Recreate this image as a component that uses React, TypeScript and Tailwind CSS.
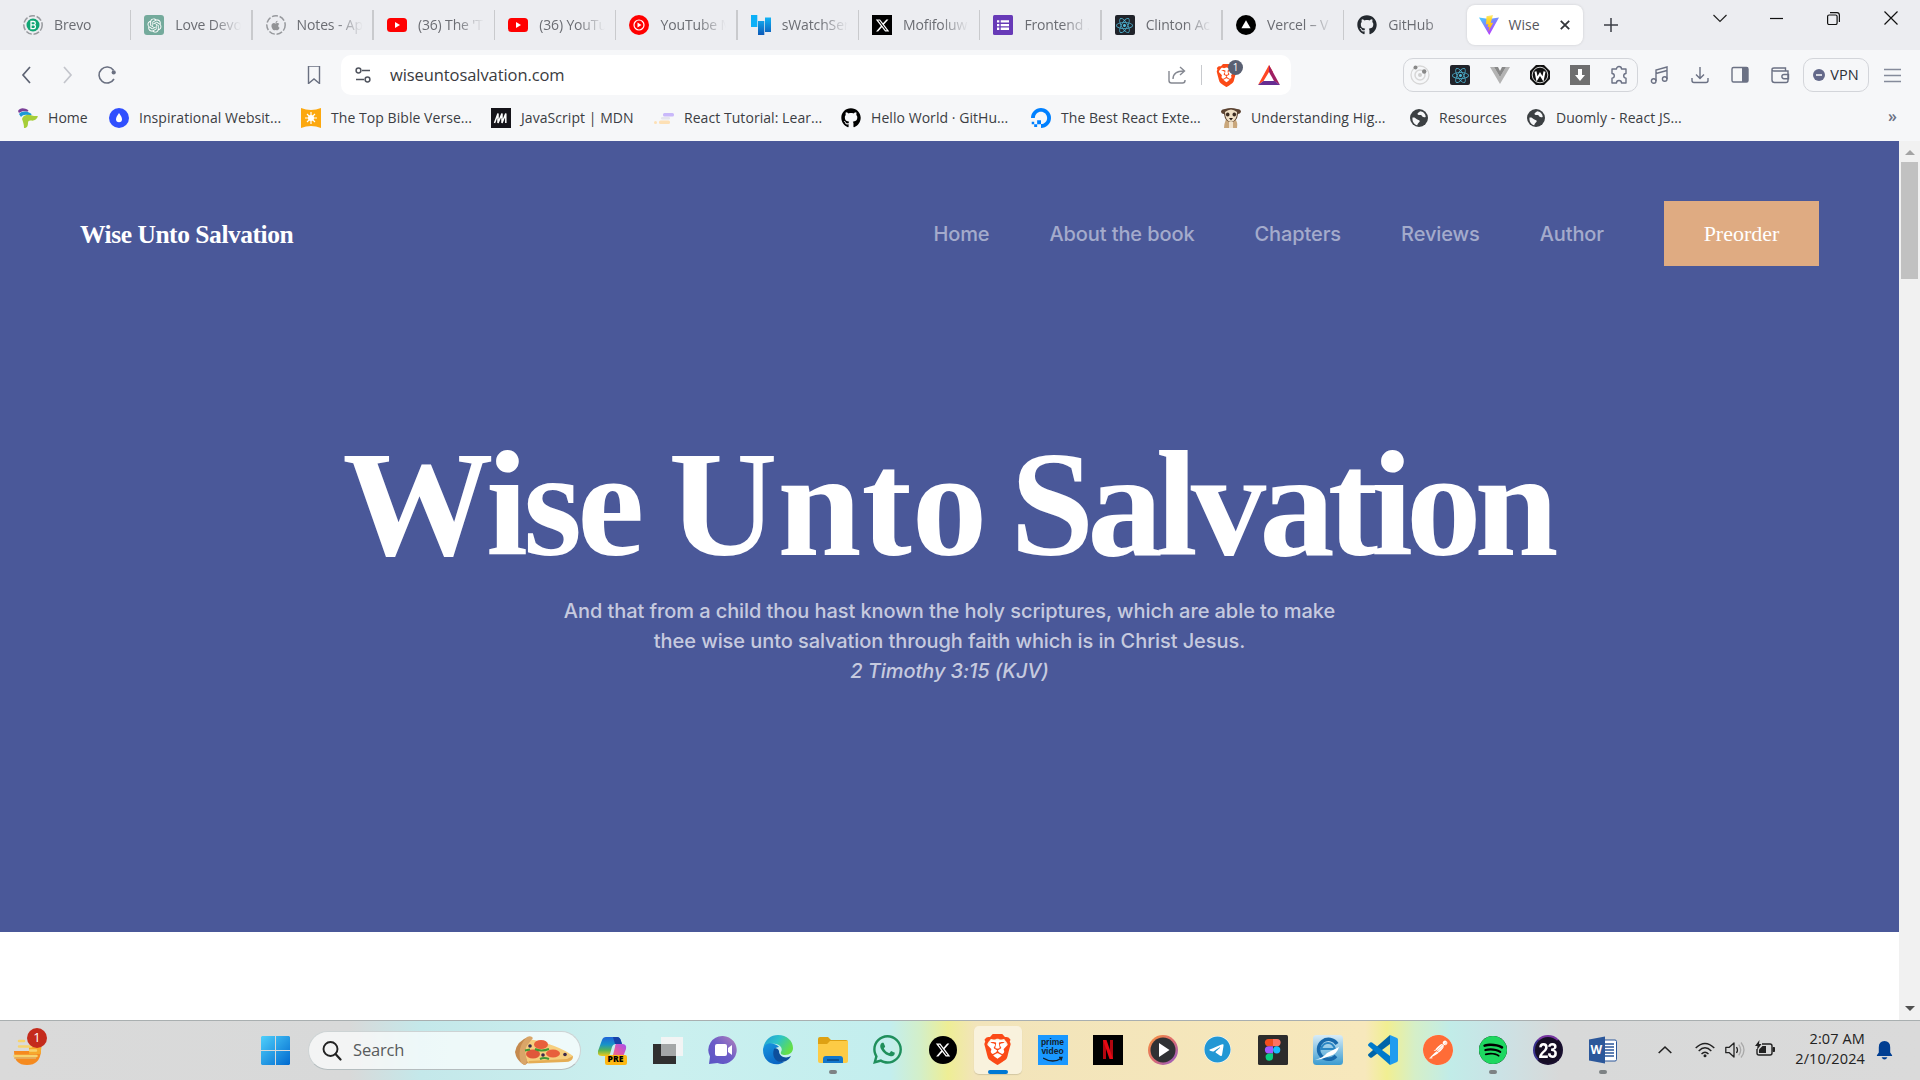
import React from "react";
import { FaGithub, FaWhatsapp, FaXTwitter, FaApple, FaTelegram, FaReact } from "react-icons/fa6";
import { SiBrave, SiSpotify, SiPostman, SiDigitalocean } from "react-icons/si";
import { RiOpenaiFill } from "react-icons/ri";

type Kids = { children?: React.ReactNode };

function S({ size = 20, box = "0 0 20 20", children }: Kids & { size?: number; box?: string }) {
  return (
    <svg width={size} height={size} viewBox={box} fill="none" className="block shrink-0">
      {children}
    </svg>
  );
}

const YouTube = () => (
  <S>
    <rect x="0" y="3" width="20" height="14" rx="3.5" fill="#f00" />
    <path d="M8 7l5 3-5 3z" fill="#fff" />
  </S>
);

const Brave = ({ size }: { size: number }) => (
  <span className="relative block">
    <svg width={size} height={size} viewBox="0 0 24 24" className="block">
      <path d="M7 5h10l3 5-3 8-5 4-5-4-3-8z" fill="#fff" />
    </svg>
    <SiBrave size={size} className="absolute inset-0 text-[#fb4a17]" />
  </span>
);

const ReactLogo = () => (
  <span className="flex size-5 items-center justify-center rounded-[2px] bg-[#20232a]">
    <FaReact size={17} className="text-[#4fb9d8]" />
  </span>
);

const Globe = () => (
  <S>
    <circle cx="10" cy="10" r="9" fill="#3c4043" />
    <path d="M3.5 9.5c2-.3 3 .3 4 1.500s3 .5 3.200 2c.1 1.700-2 1.500-2.400 4.300C5 16.500 3 13.500 3.500 9.500zM11 3.200c-.6 1.300-2.300 1.300-2.500 2.500s1.600 1.500 3 1.300c1.600-.2 1.300 1.600 2.600 2.100 1 .4 2.100-.1 2.600-.1.100-3.200-2.600-5.500-5.700-5.800z" fill="#f6f7f9" />
  </S>
);

const tabs: { title: string; icon: React.ReactNode }[] = [
  {
    title: "Brevo",
    icon: (
      <S>
        <circle cx="10" cy="10" r="9.200" stroke="#97999d" strokeWidth="1.500" strokeDasharray="6 1.800" />
        <circle cx="10" cy="10" r="6.500" fill="#0fa573" />
        <path d="M8 6.500h2.600a1.600 1.600 0 010 3.400H8zM8 9.900h3a1.900 1.900 0 010 3.700H8zM8 6.500v7.100" stroke="#fff" strokeWidth="1.300" />
      </S>
    ),
  },
  {
    title: "Love Devo",
    icon: (
      <span className="flex size-5 items-center justify-center rounded-[3px] bg-[#74aa9c]">
        <RiOpenaiFill size={17} className="text-white" />
      </span>
    ),
  },
  {
    title: "Notes - Ap",
    icon: (
      <span className="relative flex size-5 items-center justify-center">
        <span className="absolute inset-0">
          <S>
            <circle cx="10" cy="10" r="9.200" stroke="#97999d" strokeWidth="1.500" strokeDasharray="6 1.800" />
          </S>
        </span>
        <FaApple size={11} className="text-[#929396]" />
      </span>
    ),
  },
  { title: "(36) The 'T", icon: <YouTube /> },
  { title: "(36) YouTu", icon: <YouTube /> },
  {
    title: "YouTube M",
    icon: (
      <S>
        <circle cx="10" cy="10" r="10" fill="#f00" />
        <circle cx="10" cy="10" r="5" stroke="#fff" strokeWidth="1.200" />
        <path d="M8.500 7.500l4 2.500-4 2.500z" fill="#fff" />
      </S>
    ),
  },
  {
    title: "sWatchSer",
    icon: (
      <S>
        <defs>
          <linearGradient id="sw" x1="0" y1="0" x2="0" y2="1">
            <stop stopColor="#12b4f5" />
            <stop offset="1" stopColor="#0c59b8" />
          </linearGradient>
        </defs>
        <path d="M0 0h6.300v12H0z" fill="#0db0f7" />
        <path d="M7 6h6.300v14H7zM14 2.500h6V17h-6z" fill="url(#sw)" />
      </S>
    ),
  },
  {
    title: "Mofifoluw",
    icon: (
      <span className="flex size-5 items-center justify-center bg-black">
        <FaXTwitter size={15} className="text-white" />
      </span>
    ),
  },
  {
    title: "Frontend .",
    icon: (
      <S>
        <rect width="20" height="20" rx="1.500" fill="#673ab7" />
        <path d="M4 5.200h2.300v2.300H4zm3.700 0H16v2.300H7.700zM4 8.900h2.300v2.300H4zm3.700 0H16v2.300H7.700zM4 12.600h2.300v2.300H4zm3.700 0H16v2.300H7.700z" fill="#fff" />
      </S>
    ),
  },
  { title: "Clinton Ac", icon: <ReactLogo /> },
  {
    title: "Vercel – V",
    icon: (
      <S>
        <circle cx="10" cy="10" r="10" fill="#000" />
        <path d="M10 5.200l4.600 8H5.400z" fill="#fff" />
      </S>
    ),
  },
  { title: "GitHub", icon: <FaGithub size={20} className="text-[#24292f]" /> },
];

const bookmarks: { label: string; w: string; icon: React.ReactNode }[] = [
  {
    label: "Home",
    w: "w-[91px]",
    icon: (
      <S>
        <path d="M0 3c2-4 7-3 10-1 1 1 0 2-2 1.500C5 3 3 3.500 1 5z" fill="#7a3f98" />
        <path d="M1 6c3-3 7-3 11-1 2 1 2 2.500 0 2.500C8 6 5 6.500 3 9z" fill="#1d9ad6" />
        <path d="M4 11c1-4 6-5 10-3.500 3 .8 4 .5 6 .7-1 3-4 5-7 4.300-2-.2-3 .5-3 2.500 0 3-1 5-4 5C6 16 5 14 4 11z" fill="#a6ce39" />
      </S>
    ),
  },
  {
    label: "Inspirational Websit...",
    w: "w-[192px]",
    icon: (
      <S>
        <circle cx="10" cy="10" r="10" fill="#304ffe" />
        <path d="M10 5c2 3 3 4.500 3 6.200a3 3 0 01-6 0C7 9.500 8 8 10 5z" fill="#fff" />
      </S>
    ),
  },
  {
    label: "The Top Bible Verse...",
    w: "w-[190px]",
    icon: (
      <S>
        <path d="M0 0q10 4 20 0v20q-10-4-20 0z" fill="#fca80f" />
        <path d="M10 4v12M4 10h12M6 6l8 8M14 6l-8 8" stroke="#fff" strokeWidth="1.200" />
        <circle cx="10" cy="10" r="3" fill="#fff" />
      </S>
    ),
  },
  {
    label: "JavaScript | MDN",
    w: "w-[163px]",
    icon: (
      <S>
        <path d="M0 0h20v20H0z" fill="#15141a" />
        <path d="M3.500 15L7 5.500V15l4-9.500V15l3.800-9.500V15" stroke="#fff" strokeWidth="1.500" />
      </S>
    ),
  },
  {
    label: "React Tutorial: Lear...",
    w: "w-[187px]",
    icon: (
      <S>
        <rect x="9" y="5" width="11" height="3.500" rx="1.500" fill="#c9b8fa" />
        <rect x="7" y="9" width="9" height="2.500" rx="1.200" fill="#e4e4ec" />
        <rect x="5" y="12.500" width="11" height="3.500" rx="1.500" fill="#fde0b5" />
        <circle cx="1.500" cy="14.500" r="1.500" fill="#fde0b5" />
      </S>
    ),
  },
  { label: "Hello World · GitHu...", w: "w-[190px]", icon: <FaGithub size={20} className="text-black" /> },
  { label: "The Best React Exte...", w: "w-[190px]", icon: <SiDigitalocean size={20} className="text-[#0080ff]" /> },
  {
    label: "Understanding Hig...",
    w: "w-[188px]",
    icon: (
      <S>
        <path d="M5 11q-2 5-2 9h13q1-6-2-9z" fill="#c9a77c" />
        <path d="M8 13h4v7H8z" fill="#f1e3cd" />
        <path d="M0 3q1-2 4-2 6-2 12 0 4 0 4 3-1 2-3 2-1 8-7 8T3 6Q0 6 0 3z" fill="#5b4332" />
        <path d="M4 4q6-5 12 0 0 9-6 10Q4 13 4 4z" fill="#efdfc5" />
        <ellipse cx="6.700" cy="6.500" rx="1.800" ry="2" fill="#3a2a20" />
        <ellipse cx="13.300" cy="6.500" rx="1.800" ry="2" fill="#3a2a20" />
        <path d="M8 10h4l-2 2.500z" fill="#231815" />
      </S>
    ),
  },
  { label: "Resources", w: "w-[117px]", icon: <Globe /> },
  { label: "Duomly - React JS...", w: "w-[180px]", icon: <Globe /> },
];

function TabStrip() {
  return (
    <div className="flex h-[50px] bg-[#ecedf1] pl-[10px]">
      {tabs.map((t, i) => (
        <div key={t.title} className="flex h-[50px] w-[121.300px] shrink-0 items-center">
          <div className="flex w-[120px] items-center gap-[11px] overflow-hidden pl-[13px]">
            {t.icon}
            <span className="mb-[2px] w-[66px] overflow-hidden text-[14px] tracking-[-0.01em] whitespace-nowrap text-[#6b6d73] [mask-image:linear-gradient(to_right,#000_58%,transparent_100%)]">
              {t.title}
            </span>
          </div>
          {i < 11 && <div className="h-[30px] w-[1.500px] bg-[#c9cacd]" />}
        </div>
      ))}
      <div className="mt-[5px] ml-[1px] flex h-10 w-[116px] shrink-0 items-center rounded-lg bg-white pl-3 shadow-[0_0_3px_#0002]">
        <S>
          <defs>
            <linearGradient id="vi" x1="0" y1="0" x2=".6" y2="1">
              <stop stopColor="#41d1ff" />
              <stop offset="1" stopColor="#bd34fe" />
            </linearGradient>
            <linearGradient id="vb" x1="0" y1="0" x2="0" y2="1">
              <stop stopColor="#ffea83" />
              <stop offset=".2" stopColor="#ffdd35" />
              <stop offset="1" stopColor="#ffa800" />
            </linearGradient>
          </defs>
          <path d="M0 2.500L10 4l10-1.500L10.300 20z" fill="url(#vi)" />
          <path d="M14 0L7.500 1.300 7 9.500l2.300-.5-.7 3.200 1.800-.5-1.200 5 5-9-2.500.4z" fill="url(#vb)" />
        </S>
        <span className="mb-[2px] ml-[10px] w-[51px] text-[14px] text-[#55565c]">Wise</span>
        <S size={10} box="0 0 10 10">
          <path d="M.8.800l8.400 8.400M9.200.800L.8 9.200" stroke="#33353a" strokeWidth="1.800" />
        </S>
      </div>
      <div className="flex h-[50px] w-[56px] items-center justify-center">
        <S size={14} box="0 0 14 14">
          <path d="M7 0v14M0 7h14" stroke="#3b3e45" strokeWidth="1.500" />
        </S>
      </div>
      <div className="ml-auto flex h-9 items-center pr-[22px]">
        <div className="w-[57px]">
          <S size={14} box="0 0 14 14">
            <path d="M.5 4L7 10.500 13.500 4" stroke="#222" strokeWidth="1.200" />
          </S>
        </div>
        <div className="w-[57px]">
          <S size={13} box="0 0 13 13">
            <path d="M0 6.500h13" stroke="#111" strokeWidth="1.200" />
          </S>
        </div>
        <div className="w-[57px]">
          <S size={13} box="0 0 13 13">
            <rect x=".6" y="3" width="9.500" height="9.500" rx="1.500" stroke="#111" strokeWidth="1.200" />
            <path d="M3 .7h7A2.500 2.500 0 0112.400 3v7" stroke="#111" strokeWidth="1.200" />
          </S>
        </div>
        <S size={14} box="0 0 14 14">
          <path d="M.5.500l13 13M13.500.500l-13 13" stroke="#111" strokeWidth="1.200" />
        </S>
      </div>
    </div>
  );
}

const Slot = ({ children }: Kids) => <div className="flex w-10 shrink-0 items-center justify-center">{children}</div>;

function Toolbar() {
  return (
    <div className="flex h-[50px] items-center">
      <div className="flex w-[134px] shrink-0 items-center pl-[7px]">
        <Slot>
          <S>
            <path d="M13 2L6 10l7 8" stroke="#5c6272" strokeWidth="1.700" />
          </S>
        </Slot>
        <Slot>
          <S>
            <path d="M7 2l7 8-7 8" stroke="#c3c5cc" strokeWidth="1.700" />
          </S>
        </Slot>
        <Slot>
          <S>
            <path d="M16.500 5.300A8 8 0 1017 14" stroke="#6a7081" strokeWidth="1.600" />
            <circle cx="16.700" cy="7.400" r="2.100" fill="#6a7081" />
          </S>
        </Slot>
      </div>
      <div className="ml-[171px] w-[36px]">
        <S size={18} box="0 0 18 18">
          <path d="M3.500 0h11v17.500L9 13l-5.500 4.500z" stroke="#6a7081" strokeWidth="1.400" />
        </S>
      </div>
      <div className="flex h-10 w-[950px] shrink-0 items-center rounded-[10px] bg-white pl-[14px]">
        <S size={16} box="0 0 16 16">
          <path d="M7 3.500h8M1 12.500h8" stroke="#50545e" strokeWidth="1.500" />
          <circle cx="3.500" cy="3.500" r="2.400" stroke="#50545e" strokeWidth="1.500" />
          <circle cx="12.500" cy="12.500" r="2.400" stroke="#50545e" strokeWidth="1.500" />
        </S>
        <span className="ml-[19px] text-[16.500px] tracking-[-0.005em] text-[#3a3b40]">wiseuntosalvation.com</span>
        <div className="ml-auto flex items-center pr-[11px]">
          <S size={18} box="0 0 18 18">
            <path d="M1 5v9.500Q1 17 3.500 17h11q2.500 0 2.500-2.500V14M5 13c0-5 3-8 11-8M12 1l4.500 4L12 9" stroke="#858891" strokeWidth="1.400" />
          </S>
          <div className="mr-[13px] ml-[15px] h-5 w-px bg-[#c8cace]" />
          <div className="relative w-[43px]">
            <Brave size={23} />
            <span className="absolute top-[-4px] left-[13px] flex size-[15px] items-center justify-center rounded-full bg-[#5a6072] text-[10px] text-white">1</span>
          </div>
          <S size={22} box="0 0 22 20">
            <path d="M11 0l4 7-4 0-5.500 9L0 20z" fill="#ff4724" />
            <path d="M11 0l11 20-6-4-5-9z" fill="#9e1f63" />
            <path d="M0 20h22l-5.500-4h-11z" fill="#662d91" />
          </S>
        </div>
      </div>
      <div className="ml-[112px] flex h-[34px] w-[235px] shrink-0 items-center justify-center rounded-[10px] border border-[#d3d5da]">
        <div className="flex items-center pr-[3px]">
          <Slot>
            <S>
              <circle cx="10" cy="10" r="9" stroke="#d7d7d7" strokeWidth="1.300" />
              <circle cx="10" cy="10" r="5" stroke="#d7d7d7" strokeWidth="1.500" />
              <circle cx="10" cy="10" r="2" fill="#cfcfcf" />
              <circle cx="5.500" cy="2.500" r="2" fill="#888" />
              <circle cx="14.200" cy="6.500" r="2.200" fill="#888" />
            </S>
          </Slot>
          <Slot><ReactLogo /></Slot>
          <Slot>
            <S>
              <path d="M0 2h4l6 10 6-10h4L10 19z" fill="#b3b3b3" />
              <path d="M4 2h4l2 4 2-4h4l-6 10z" fill="#888" />
            </S>
          </Slot>
          <Slot>
            <S>
              <path d="M6 0h8l6 6v8l-6 6H6l-6-6V6z" fill="#111" />
              <circle cx="10" cy="10" r="7.800" stroke="#fff" strokeWidth=".8" />
              <path d="M5.500 6.500L7 14l3-5 3 5 1.500-7.500" stroke="#fff" strokeWidth="2" />
            </S>
          </Slot>
          <Slot>
            <S>
              <path d="M0 0h20v20H0z" fill="#6f6f6f" />
              <path d="M8 4h4v6h3l-5 6-5-6h3z" fill="#fff" />
            </S>
          </Slot>
          <div className="flex w-[38px] justify-center">
            <S>
              <path d="M3 4h4.500a2.500 2.500 0 015 0H17v4.500a2.300 2.300 0 000 4.600V18h-4.500a2.500 2.500 0 00-5 0H3v-4.900a2.300 2.300 0 000-4.600z" stroke="#6b7184" strokeWidth="1.400" strokeLinejoin="round" />
            </S>
          </div>
        </div>
      </div>
      <div className="flex items-center pl-[2px]">
        <Slot>
          <S>
            <path d="M6 16V5l11-3v12M6 8.500l11-3" stroke="#6b7184" strokeWidth="1.400" />
            <circle cx="3.700" cy="16" r="2.300" stroke="#6b7184" strokeWidth="1.400" />
            <circle cx="14.700" cy="14" r="2.300" stroke="#6b7184" strokeWidth="1.400" />
          </S>
        </Slot>
        <Slot>
          <S>
            <path d="M10 2v11M6 9.500l4 4 4-4M2 13v2.500Q2 17.500 4 17.500h12q2 0 2-2V13" stroke="#6b7184" strokeWidth="1.400" />
          </S>
        </Slot>
        <Slot>
          <S>
            <rect x="2" y="2.500" width="16" height="14.500" rx="1.500" stroke="#6b7184" strokeWidth="1.400" />
            <path d="M12 2.500h6V17h-6z" fill="#6b7184" />
          </S>
        </Slot>
        <Slot>
          <S>
            <path d="M18 7V6H4Q2 6 2 4.500T4 3h11.500v3M2 4.500V15q0 2.500 2.500 2.500H16q2 0 2-2V6" stroke="#6b7184" strokeWidth="1.400" />
            <path d="M18.500 9.500H14a2 2 0 000 4.200h4.500z" stroke="#6b7184" strokeWidth="1.400" />
          </S>
        </Slot>
      </div>
      <div className="ml-[3px] flex h-[34px] w-[66px] shrink-0 items-center justify-center gap-[5px] rounded-[10px] border border-[#d3d5da]">
        <S size={12} box="0 0 12 12">
          <circle cx="6" cy="6" r="6" fill="#64698a" />
          <path d="M3 6h6" stroke="#fff" strokeWidth="1.500" />
        </S>
        <span className="text-[14.500px] text-[#2d2f36]">VPN</span>
      </div>
      <div className="pl-[15px]">
        <S size={17} box="0 0 17 17">
          <path d="M0 2.500h17M0 8.500h17M0 14.500h17" stroke="#858b9b" strokeWidth="1.500" />
        </S>
      </div>
    </div>
  );
}

function Bookmarks() {
  return (
    <div className="flex h-[36px] items-center pl-[18px]">
      {bookmarks.map((b) => (
        <div key={b.label} className={`flex shrink-0 items-center gap-[10px] ${b.w}`}>
          {b.icon}
          <span className="mb-[2px] text-[14px] tracking-[0.004em] whitespace-nowrap text-[#3b3d43]">{b.label}</span>
        </div>
      ))}
      <span className="mr-[23px] ml-auto pb-1 text-[16px] font-semibold text-[#6b7184]">»</span>
    </div>
  );
}

function Site() {
  return (
    <main className="h-full flex-1 bg-white">
      <section className="h-[791px] bg-[#4a5899] pt-[60px]">
        <header className="flex h-[65px] items-center pr-20 pl-20">
          <div className="pt-[3px] font-['Liberation_Serif',serif] text-[25.500px] font-bold tracking-[-0.018em] text-white">Wise Unto Salvation</div>
          <nav className="ml-auto flex items-center gap-[60px] font-[Inter,sans-serif] text-[20px] font-medium tracking-[-0.1px] text-white/50">
            <a>Home</a>
            <a>About the book</a>
            <a>Chapters</a>
            <a>Reviews</a>
            <a>Author</a>
            <button className="h-[65px] w-[155px] bg-[#dfab82] font-['Liberation_Serif',serif] text-[22px] font-normal tracking-normal text-white">Preorder</button>
          </nav>
        </header>
        <div className="mt-[160px] flex flex-col items-center">
          <h1 className="flex h-[166px] pt-[3px] pr-[5px] font-['Liberation_Serif',serif] text-[151px] leading-[150px] font-bold whitespace-nowrap text-white">
            <span className="tracking-[-4.800px]">Wise</span>
            <span className="ml-[29px]">Unto</span>
            <span className="ml-[23px] tracking-[-7px]">Salvation</span>
          </h1>
          <p className="mt-[4px] text-center font-[Inter,sans-serif] text-[20px] leading-[30px] font-medium tracking-[-0.075px] text-white/70">
            And that from a child thou hast known the holy scriptures, which are able to make
            <br />
            thee wise unto salvation through faith which is in Christ Jesus.
            <br />
            <em>2 Timothy 3:15 (KJV)</em>
          </p>
        </div>
      </section>
    </main>
  );
}

function Scrollbar() {
  return (
    <div className="flex w-[21px] flex-col items-center bg-[#f1f1f1]">
      <div className="flex h-[21px] items-center">
        <S size={10} box="0 0 10 6">
          <path d="M0 6l5-5 5 5z" fill="#a3a3a3" />
        </S>
      </div>
      <div className="h-[117px] w-[17px] bg-[#c1c1c1]" />
      <div className="mt-auto flex h-[22px] items-center">
        <S size={10} box="0 0 10 6">
          <path d="M0 0l5 5 5-5z" fill="#505050" />
        </S>
      </div>
    </div>
  );
}

const apps: { name: string; state?: "open" | "active"; icon: React.ReactNode }[] = [
  {
    name: "copilot",
    icon: (
      <div className="relative">
        <S size={30} box="0 0 30 30">
          <defs>
            <linearGradient id="c1" x1="0" y1="0" x2="0" y2="1">
              <stop stopColor="#1f63d8" />
              <stop offset=".4" stopColor="#1793c8" />
              <stop offset=".7" stopColor="#57b455" />
              <stop offset="1" stopColor="#f3cb1b" />
            </linearGradient>
            <linearGradient id="c2" x1="1" y1="0" x2="0" y2="1">
              <stop stopColor="#a24ff0" />
              <stop offset=".5" stopColor="#e45aa5" />
              <stop offset="1" stopColor="#fb8a55" />
            </linearGradient>
          </defs>
          <path d="M8 2h11q3 0 4 4l1 3h-6q-3 0-4 3l-2 7q-1 2-3 2H4q-5 0-4-5L4 5q1-3 4-3z" fill="url(#c1)" />
          <path d="M15 2h4q3 0 4 4l1 3h-7z" fill="#1741a8" />
          <path d="M18 9h6q5 0 4 5l-3 8q-1 3-4 3h-9q2-1 3-5l2-8q0-2 1-3z" fill="url(#c2)" />
        </S>
        <span className="absolute bottom-0 left-[7px] flex h-[10px] w-[22px] items-center justify-center rounded-[2px] bg-[#fdb813] text-[8.500px] font-extrabold text-black">PRE</span>
      </div>
    ),
  },
  {
    name: "task-view",
    icon: (
      <S size={30} box="0 0 30 30">
        <path d="M0 9h23v20H0z" fill="#303030" />
        <path d="M8 2h22v19H8z" fill="#f2f4f4" />
        <path d="M8 9h15v12H8z" fill="#a4a7a7" />
      </S>
    ),
  },
  {
    name: "chat",
    icon: (
      <S size={30} box="0 0 30 30">
        <defs>
          <linearGradient id="ch" x1="1" y1="0" x2="0" y2="1">
            <stop stopColor="#b684bb" />
            <stop offset=".5" stopColor="#6c5cc8" />
            <stop offset="1" stopColor="#5a55c4" />
          </linearGradient>
        </defs>
        <path d="M15 1a14 14 0 11-5.500 27L1 29l1-7.500A14 14 0 0115 1z" fill="url(#ch)" />
        <rect x="7" y="9" width="12" height="12" rx="2" fill="#fff" />
        <path d="M20 13l4-3v10l-4-3z" fill="#fff" />
      </S>
    ),
  },
  {
    name: "edge",
    icon: (
      <S size={30} box="0 0 30 30">
        <defs>
          <linearGradient id="e1" x1="0" y1="0" x2="1" y2=".5">
            <stop stopColor="#2199d8" />
            <stop offset=".5" stopColor="#2cc3c9" />
            <stop offset="1" stopColor="#64df48" />
          </linearGradient>
          <linearGradient id="e2" x1="0" y1="0" x2=".5" y2="1">
            <stop stopColor="#1797e0" />
            <stop offset="1" stopColor="#0a66c4" />
          </linearGradient>
        </defs>
        <path d="M.3 13C2 4 8 0 15 0c9 0 15 6 15 13 0 4-3 7-8 7-3 0-5-1-4-3 2-3 0-7-5-8C7 8 2 10 .3 13z" fill="url(#e1)" />
        <path d="M0 15c0-5 6-8 11-6 4 1 5 3 5 3-5 0-6 6-4 10 2 3 5 5 9 5-9 6-21 0-21-12z" fill="url(#e2)" />
        <path d="M11 14c-3 8 3 16 12 12 2-1 4-3 5-5-5 3-12 1-12-5 0-1-3-4-5-2z" fill="#0d4f9c" />
      </S>
    ),
  },
  {
    name: "explorer",
    state: "open",
    icon: (
      <S size={30} box="0 0 30 30">
        <path d="M0 4q0-2 2-2h8l3 3h15q2 0 2 2v6H0z" fill="#dea113" />
        <path d="M0 9h9l3-3h18v20q0 2-2 2H2q-2 0-2-2z" fill="#fdcb45" />
        <path d="M5 28v-4q0-3 3-3h14q3 0 3 3v4z" fill="#1277cc" />
        <path d="M9 24h12v2H9z" fill="#0b5295" />
      </S>
    ),
  },
  { name: "whatsapp", icon: <FaWhatsapp size={33} className="text-[#1f8f5c]" /> },
  {
    name: "x",
    icon: (
      <span className="flex size-7 items-center justify-center rounded-full bg-black">
        <FaXTwitter size={16} className="text-white" />
      </span>
    ),
  },
  { name: "brave", state: "active", icon: <Brave size={31} /> },
  {
    name: "prime",
    icon: (
      <span className="flex size-[30px] flex-col items-center bg-[#1a98ff] pt-[3px] font-['Liberation_Sans',sans-serif] text-[8.500px] leading-[9px] font-bold text-[#13202c]">
        <span className="h-[9px]">prime</span>
        <span className="h-[9px]">video</span>
        <svg width="20" height="8" viewBox="0 0 20 8" fill="none">
          <path d="M0 2q10 6 19 0M16 1.500l3 0-1 3" stroke="#13202c" strokeWidth="1.300" />
        </svg>
      </span>
    ),
  },
  {
    name: "netflix",
    icon: (
      <S size={30} box="0 0 30 30">
        <path d="M0 0h30v30H0z" fill="#000" />
        <path d="M10 5h3v19h-3zM17 5h3v19h-3z" fill="#b1060f" />
        <path d="M10 5h3.500L20 24h-3.500z" fill="#e50914" />
      </S>
    ),
  },
  {
    name: "media",
    icon: (
      <S size={30} box="0 0 30 30">
        <defs>
          <linearGradient id="mp" x1="0" y1="0" x2="1" y2="1">
            <stop stopColor="#f7953b" />
            <stop offset=".5" stopColor="#dd6b70" />
            <stop offset="1" stopColor="#8a5bd0" />
          </linearGradient>
        </defs>
        <circle cx="15" cy="15" r="15" fill="url(#mp)" />
        <circle cx="15" cy="15" r="12.500" fill="#303134" />
        <path d="M11 8l10.500 7L11 22z" fill="#fff" />
      </S>
    ),
  },
  {
    name: "telegram",
    icon: (
      <span className="block rounded-full bg-white">
        <FaTelegram size={27} className="text-[#2297d4]" />
      </span>
    ),
  },
  {
    name: "figma",
    icon: (
      <S size={30} box="0 0 30 30">
        <rect width="30" height="30" rx="1.500" fill="#2c2c2c" />
        <path d="M15 4h-4.500a3.500 3.500 0 000 7.200H15z" fill="#f24e1e" />
        <path d="M15 4h4a3.500 3.500 0 010 7.200h-4z" fill="#ff7262" />
        <path d="M15 11.200h-4.500a3.500 3.500 0 000 7.200H15z" fill="#a259ff" />
        <circle cx="18.700" cy="14.800" r="3.600" fill="#1abcfe" />
        <path d="M15 18.400h-4.500A3.700 3.700 0 1015 22z" fill="#0acf83" />
      </S>
    ),
  },
  {
    name: "scan",
    icon: (
      <S size={30} box="0 0 30 30">
        <defs>
          <linearGradient id="sc" x1="0" y1="0" x2="0" y2="1">
            <stop stopColor="#d8ecf7" />
            <stop offset="1" stopColor="#3a9bd0" />
          </linearGradient>
        </defs>
        <rect width="30" height="30" rx="3.500" fill="url(#sc)" />
        <path d="M24 9A10 10 0 1023 21" stroke="#1769ac" strokeWidth="3.500" />
        <path d="M8 14h14q-2-6-7-6t-7 6z" stroke="#2a86c4" strokeWidth="2" />
        <path d="M2 25q8-2 12-7l12-6q-2 7-9 9-7 3-15 4z" fill="#fff" />
      </S>
    ),
  },
  {
    name: "vscode",
    icon: (
      <S size={30} box="0 0 30 30">
        <path d="M22 0v9L4 22.500q-1 .7-2 0L.5 21q-1-1 0-2z" fill="#0065a9" />
        <path d="M22 30v-9L4 7.500q-1-.7-2 0L.5 9q-1 1 0 2z" fill="#007acc" />
        <path d="M22 0l7 3q1 .5 1 2v20q0 1.500-1 2l-7 3z" fill="#1f9cf0" />
      </S>
    ),
  },
  {
    name: "postman",
    icon: (
      <span className="block rounded-full bg-white">
        <SiPostman size={30} className="text-[#ff6c37]" />
      </span>
    ),
  },
  {
    name: "spotify",
    state: "open",
    icon: (
      <span className="block rounded-full bg-black">
        <SiSpotify size={28} className="text-[#1ed760]" />
      </span>
    ),
  },
  {
    name: "badge-23",
    icon: (
      <span className="flex size-[30px] items-center justify-center rounded-full border-2 border-[#1a1030] border-t-[#7535a0] border-l-[#38318d] bg-[#150e25] text-white">
        <span className="scale-y-125 font-['Liberation_Sans',sans-serif] text-[18px] leading-5 font-bold tracking-[-1px]">23</span>
      </span>
    ),
  },
  {
    name: "word",
    state: "open",
    icon: (
      <span className="relative block">
        <S size={28} box="0 0 28 28">
          <path d="M14 4h12q1.500 0 1.500 1.500v18q0 1.500-1.500 1.500H14z" fill="#fff" stroke="#2b579a" />
          <path d="M16 8h9M16 11h9M16 14h9M16 17h9M16 20h9" stroke="#2b579a" strokeWidth="1.400" />
          <path d="M0 3.500L16 .5v27L0 24.500z" fill="#2b579a" />
        </S>
        <span className="absolute top-[6px] left-[2px] text-[12px] leading-4 font-bold text-white">W</span>
      </span>
    ),
  },
];

function Pizza() {
  return (
    <svg width="59" height="30" viewBox="0 0 59 30" fill="none">
      <path d="M13 1Q2 5 0 16q1 8 9 13l6-3z" fill="#c58a4e" />
      <path d="M14 3q30 6 44 17 0 5-8 5L13 27Q6 15 14 3z" fill="#f6cf7e" />
      <path d="M13 27.500l37-1.500q8 0 8-6l-6 3-38 2z" fill="#e5ad55" />
      <path d="M12 1q4-2 6 1l-4 5q-6 6-2 17l-1 5-5-2Q1 12 12 1z" fill="#d9a568" />
      <ellipse cx="26" cy="8.500" rx="7" ry="4.500" fill="#e8603c" />
      <ellipse cx="18" cy="18" rx="7" ry="4.500" fill="#e0573a" />
      <ellipse cx="38" cy="17.500" rx="7" ry="4" fill="#e8603c" />
      <path d="M20 13q6 3 14 0M25 23q4-2 9 0M10 14.500l5-1" stroke="#3f9a35" strokeWidth="2" />
      <circle cx="15" cy="10" r="1.800" fill="#3b2a4b" />
      <circle cx="28" cy="19" r="1.800" fill="#3b2a4b" />
      <circle cx="50" cy="18.500" r="1.800" fill="#3b2a4b" />
    </svg>
  );
}

function Taskbar() {
  return (
    <footer className="flex h-[60px] items-center border-t border-[#a9afb0] bg-[linear-gradient(to_right,#dadada_0px,#d8d9d9_350px,#c4e8ea_420px,#cbf0ef_650px,#c3eeee_890px,#d3efc9_920px,#eeee95_948px,#f2e4ba_975px,#f7e8bc_1365px,#f1ef92_1387px,#d5efc8_1415px,#c1ece8_1450px,#cbe2e5_1500px,#d8d9d9_1560px,#dadada_1920px)]">
      <div className="relative ml-[13px] h-[42px] w-[248px]">
        <svg width="30" height="42" viewBox="0 0 30 42" fill="none">
          <path d="M1 21h27q-1 14-14 14T1 21z" fill="#f58a1f" />
          <path d="M16 17h12.500l-1 7H16z" fill="#f6a92c" />
          <path d="M6 11h5M6 16.500h12M17 20.500h6M1.500 26h22" stroke="#f7d36c" strokeWidth="2.500" strokeLinecap="round" />
          <path d="M1 28h22" stroke="#e0b36a" strokeWidth="1.500" />
        </svg>
        <span className="absolute top-[-2px] left-[14px] flex size-5 items-center justify-center rounded-full bg-[#c42b1c] text-[13px] text-white">1</span>
      </div>
      <S size={29} box="0 0 29 29">
        <defs>
          <linearGradient id="wn" x1="0" y1="0" x2="29" y2="29" gradientUnits="userSpaceOnUse">
            <stop stopColor="#4fd0fb" />
            <stop offset="1" stopColor="#0069cf" />
          </linearGradient>
        </defs>
        <path d="M1 0h13v14H0V1zM15 0h13l1 1v13H15zM0 15h14v14H1l-1-1zM15 15h14v13l-1 1H15z" fill="url(#wn)" />
      </S>
      <div className="ml-[18px] flex h-[39px] w-[273px] shrink-0 items-center rounded-full border border-[#cdd3d4] border-b-[#b5bdbf] bg-white/70 pl-[13px]">
        <S>
          <circle cx="8.500" cy="8" r="7" stroke="#222" strokeWidth="1.900" />
          <path d="M13.500 13l5 5.500" stroke="#222" strokeWidth="2.200" strokeLinecap="round" />
        </S>
        <span className="ml-[11px] text-[16.500px] tracking-[-0.01em] text-[#585b5c]">Search</span>
        <span className="mr-[6px] ml-auto">
          <Pizza />
        </span>
      </div>
      <div className="ml-[4px] flex h-full items-center">
        {apps.map((a) => (
          <div key={a.name} className="relative flex h-full w-[55px] shrink-0 items-center justify-center">
            {a.state === "active" && <div className="absolute top-[5px] h-12 w-12 rounded-[5px] bg-white/50 shadow-[0_1px_1px_#0002]" />}
            <div className="relative mb-[2px]">{a.icon}</div>
            {a.state && (
              <div className={a.state === "active" ? "absolute top-[49px] h-1 w-5 rounded-full bg-[#0078d4]" : "absolute top-[49px] h-1 w-2 rounded-full bg-[#7d8284]"} />
            )}
          </div>
        ))}
      </div>
      <div className="mb-[1px] ml-[28px] flex items-center">
        <div className="w-[37px]">
          <S size={14} box="0 0 14 14">
            <path d="M.7 10L7 4l6.300 6" stroke="#222" strokeWidth="1.600" />
          </S>
        </div>
        <div className="w-[30px]">
          <S>
            <path d="M.7 8q9.300-9 18.600 0M3.700 11q6.300-6.500 12.600 0M6.500 14q3.500-3.500 7 0" stroke="#222" strokeWidth="1.400" />
            <circle cx="10" cy="15.700" r="1.500" fill="#222" />
          </S>
        </div>
        <div className="w-[30px]">
          <S>
            <path d="M.8 7.300h3.500L9 3v14l-4.700-4.300H.8zM11.500 7q2 3 0 6" stroke="#222" strokeWidth="1.300" strokeLinejoin="round" />
            <path d="M13.700 4.700q4 5.300 0 10.600M16 2.500q6 7.500 0 15" stroke="#a9a9a9" strokeWidth="1.300" />
          </S>
        </div>
        <S>
          <path d="M7 4h8q2 0 2 2v7q0 2-2 2H4q-2 0-2-2V9" stroke="#222" strokeWidth="1.400" />
          <path d="M4 13V9.500L7.500 6H11v7z" fill="#222" />
          <path d="M18 7.500h1.500v4H18z" fill="#222" stroke="#222" />
          <path d="M4.500 0L0 6h2.500L2 10l4.500-6H4z" fill="#222" />
        </S>
      </div>
      <div className="mb-[3px] ml-auto text-right text-[14.500px] leading-5 tracking-[0.008em] text-[#222]">
        <div>2:07 AM</div>
        <div>2/10/2024</div>
      </div>
      <div className="mr-[26px] ml-[10px]">
        <S size={19} box="-1 0 16 20">
          <path d="M7 0q6 .3 6 6.500V12l2 3v.8H-1V15l2-3V6.500Q1 .3 7 0z" fill="#003e92" />
          <path d="M4 17h6q-1 2.500-3 2.500T4 17z" fill="#003e92" />
        </S>
      </div>
    </footer>
  );
}

export default function App() {
  return (
    <div className="flex h-[1080px] w-[1920px] flex-col overflow-hidden font-['Open_Sans',sans-serif]">
      <div className="h-[141px] bg-[#f6f7f9]">
        <TabStrip />
        <Toolbar />
        <Bookmarks />
      </div>
      <div className="flex h-[879px]">
        <Site />
        <Scrollbar />
      </div>
      <Taskbar />
    </div>
  );
}
